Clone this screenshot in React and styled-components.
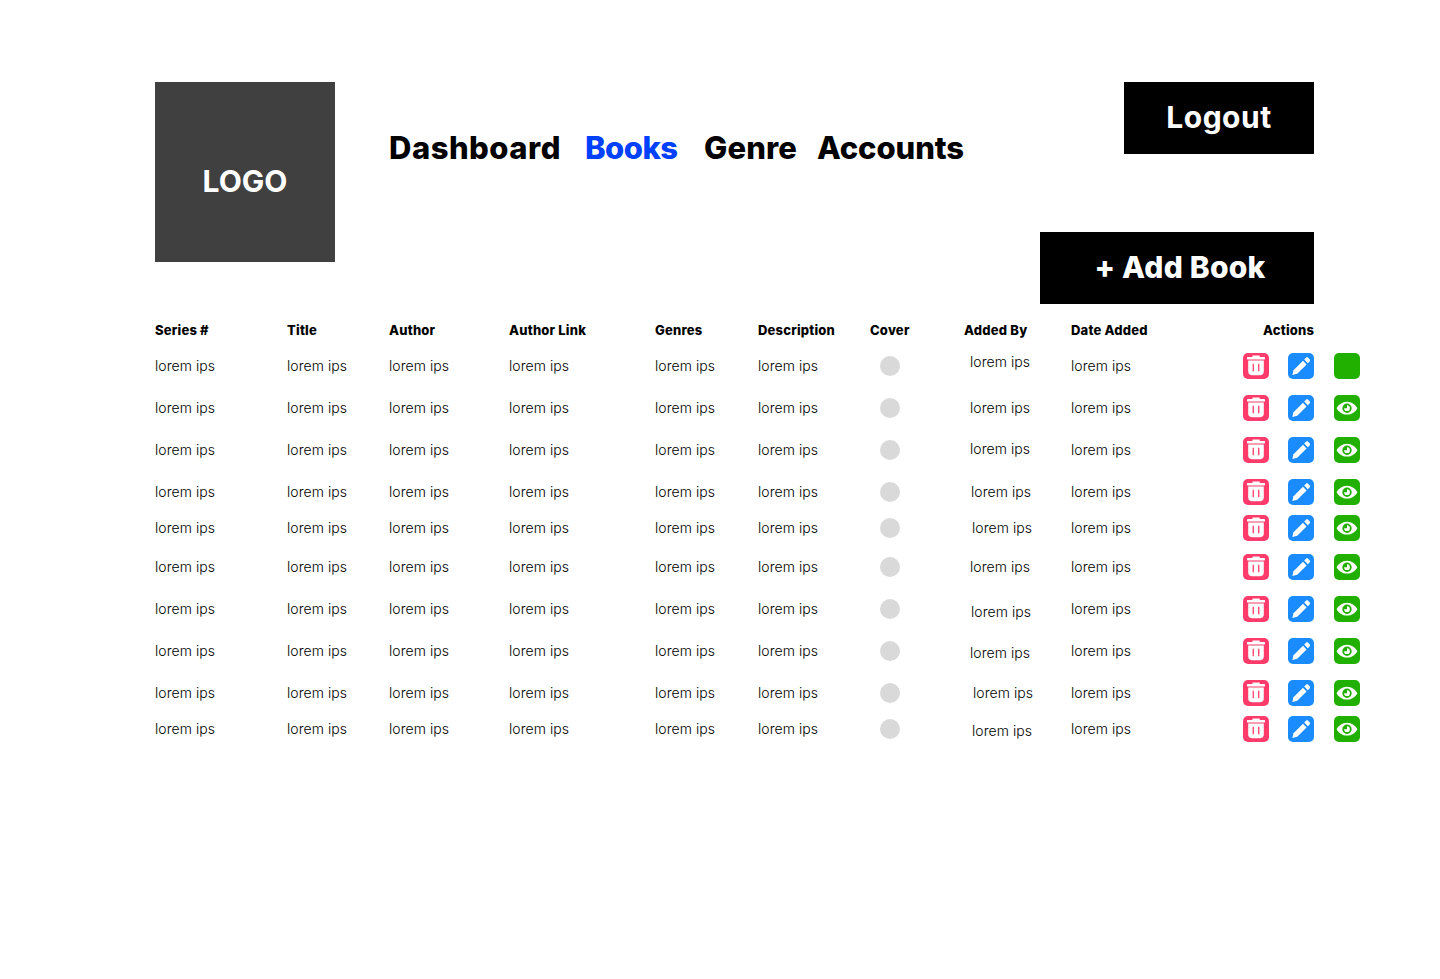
import React from "react";
import styled, { createGlobalStyle } from "styled-components";

const COLUMNS = "132px 102px 120px 146px 103px 112px 94px 107px 172px 45px 46px 26px";

// gap = space above the row, addedX / addedY = how far the Added By text sits off its column
const rows = [
  { gap: 0, addedX: 6, addedY: -8, hideEye: true },
  { gap: 16, addedX: 6, addedY: 0 },
  { gap: 16, addedX: 6, addedY: -2 },
  { gap: 16, addedX: 7, addedY: 0 },
  { gap: 10, addedX: 8, addedY: 0 },
  { gap: 13, addedX: 6, addedY: 0 },
  { gap: 16, addedX: 7, addedY: 6 },
  { gap: 16, addedX: 6, addedY: 4 },
  { gap: 16, addedX: 9, addedY: 0 },
  { gap: 10, addedX: 8, addedY: 4 },
];

const App = () => (
  <>
    <GlobalStyle />
    <Page>
      <Header>
        <Logo>LOGO</Logo>
        <Nav>
          <NavLink $width={196} $spacing={0.5}>Dashboard</NavLink>
          <NavLink $width={119} $spacing={-0.5} $active>Books</NavLink>
          <NavLink $width={113} $spacing={0.1}>Genre</NavLink>
          <NavLink $spacing={-0.1}>Accounts</NavLink>
        </Nav>
        <HeaderActions>
          <LogoutButton>Logout</LogoutButton>
          <AddButton>+ Add Book</AddButton>
        </HeaderActions>
      </Header>

      <HeadRow>
        <HeadCell>Series #</HeadCell>
        <HeadCell>Title</HeadCell>
        <HeadCell>Author</HeadCell>
        <HeadCell>Author Link</HeadCell>
        <HeadCell>Genres</HeadCell>
        <HeadCell>Description</HeadCell>
        <HeadCell>Cover</HeadCell>
        <HeadCell>Added By</HeadCell>
        <HeadCell>Date Added</HeadCell>
        <ActionsHead>Actions</ActionsHead>
      </HeadRow>

      {rows.map((row, i) => (
        <Row key={i} $gap={row.gap}>
          <Cell>lorem ips</Cell>
          <Cell>lorem ips</Cell>
          <Cell>lorem ips</Cell>
          <Cell>lorem ips</Cell>
          <Cell>lorem ips</Cell>
          <Cell>lorem ips</Cell>
          <CoverCell>
            <Cover />
          </CoverCell>
          <AddedBy $x={row.addedX} $y={row.addedY}>lorem ips</AddedBy>
          <Cell>lorem ips</Cell>
          <IconButton $color="#ff3b6b">
            <TrashIcon />
          </IconButton>
          <IconButton $color="#1a8cff">
            <PenIcon />
          </IconButton>
          <IconButton $color="#22b000">{!row.hideEye && <EyeIcon />}</IconButton>
        </Row>
      ))}
    </Page>
  </>
);

export default App;

const TrashIcon = () => (
  <svg width="26" height="26" viewBox="0 0 26 26" fill="#fff">
    <path d="M9.500 2.500h7.200v1.400h4.800c.3 0 .5.200.5.500v1.700c0 .3-.2.500-.5.500H4.500c-.3 0-.5-.2-.5-.5V4.400c0-.3.200-.5.500-.5h5z" />
    <path
      fillRule="evenodd"
      d="M5.200 7.600h15.600v11c0 2.200-1.300 3.600-3.500 3.600H8.700c-2.200 0-3.500-1.400-3.500-3.600zM9.600 10.800v7.400h1.300v-7.400zm5.500 0v7.400h1.300v-7.400z"
    />
  </svg>
);

const PenIcon = () => (
  <svg width="26" height="26" viewBox="0 0 26 26" fill="#fff">
    <path d="M15 7.800l3.600 3.600-9.400 9.400-4.900 1.300 1.200-4.800z" />
    <path d="M16.200 6.600l1.800-1.800c.6-.6 1.500-.6 2.100 0l1.500 1.500c.6.600.6 1.500 0 2.100l-1.800 1.800z" />
  </svg>
);

const EyeIcon = () => (
  <svg width="26" height="26" viewBox="0 0 26 26">
    <path
      fill="#fff"
      fillRule="evenodd"
      d="M13 6.800c4.800 0 8.600 3 10.400 6.400-1.800 3.400-5.600 6.400-10.400 6.400S4.400 16.600 2.600 13.200C4.400 9.800 8.200 6.800 13 6.800zM13 8.500a4.700 4.700 0 1 0 0 9.400 4.700 4.700 0 0 0 0-9.400z"
    />
    <path fill="#fff" d="M13 10.300a2.900 2.900 0 1 1-2.900 2.900H13z" />
  </svg>
);

const GlobalStyle = createGlobalStyle`
  html, body {
    margin: 0;
    background: #fff;
    color: #000;
    font-family: "Inter", "Liberation Sans", sans-serif;
  }
`;

const Page = styled.div`
  width: 1205px;
  min-height: 979px;
  box-sizing: border-box;
  padding: 82px 0 0 155px;
  margin-right: auto;
`;

const Header = styled.header`
  display: flex;
  width: 1159px;
  height: 222px;
`;

const Logo = styled.div`
  width: 180px;
  height: 180px;
  box-sizing: border-box;
  padding-top: 18px;
  background: #404040;
  color: #fff;
  display: flex;
  align-items: center;
  justify-content: center;
  font-size: 30px;
  font-weight: 700;
  flex-shrink: 0;
`;

const Nav = styled.nav`
  display: flex;
  align-items: center;
  height: 130px;
  margin-left: 54px;
`;

const NavLink = styled.a`
  width: ${(p) => (p.$width ? `${p.$width}px` : "auto")};
  font-size: 31px;
  font-weight: 800;
  letter-spacing: ${(p) => p.$spacing}px;
  white-space: nowrap;
  color: ${(p) => (p.$active ? "#0040ff" : "#000")};
`;

const HeaderActions = styled.div`
  margin-left: auto;
  display: flex;
  flex-direction: column;
  align-items: flex-end;
  gap: 78px;
`;

const LogoutButton = styled.button`
  width: 190px;
  height: 72px;
  padding: 0 0 2px;
  border: 0;
  background: #000;
  color: #fff;
  font: 700 30px "Inter", sans-serif;
  letter-spacing: 0.5px;
`;

const AddButton = styled.button`
  width: 274px;
  height: 72px;
  padding: 0 0 2px 6px;
  border: 0;
  background: #000;
  color: #fff;
  font: 800 30px "Inter", sans-serif;
  letter-spacing: 0.2px;
`;

const HeadRow = styled.div`
  display: grid;
  grid-template-columns: ${COLUMNS};
  align-items: center;
  height: 20px;
  margin-top: 16px;
  margin-bottom: 13px;
`;

const HeadCell = styled.div`
  font-size: 13px;
  font-weight: 800;
  letter-spacing: 0.2px;
  white-space: nowrap;
`;

const ActionsHead = styled(HeadCell)`
  grid-column: span 3;
  padding-left: 20px;
`;

const Row = styled.div`
  display: grid;
  grid-template-columns: ${COLUMNS};
  grid-template-rows: 26px;
  align-items: center;
  height: 26px;
  margin-top: ${(p) => p.$gap}px;
`;

const Cell = styled.div`
  font-size: 14px;
  font-weight: 350;
  letter-spacing: 0.06px;
  padding-bottom: 2px;
  white-space: nowrap;
`;

const AddedBy = styled(Cell)`
  margin-left: ${(p) => p.$x}px;
  margin-top: ${(p) => p.$y}px;
`;

const CoverCell = styled.div`
  display: flex;
  padding-left: 10px;
`;

const Cover = styled.div`
  width: 20px;
  height: 20px;
  border-radius: 50%;
  background: #d9d9d9;
`;

const IconButton = styled.div`
  width: 26px;
  height: 26px;
  border-radius: 5px;
  background: ${(p) => p.$color};
  display: flex;
  align-items: center;
  justify-content: center;
`;
